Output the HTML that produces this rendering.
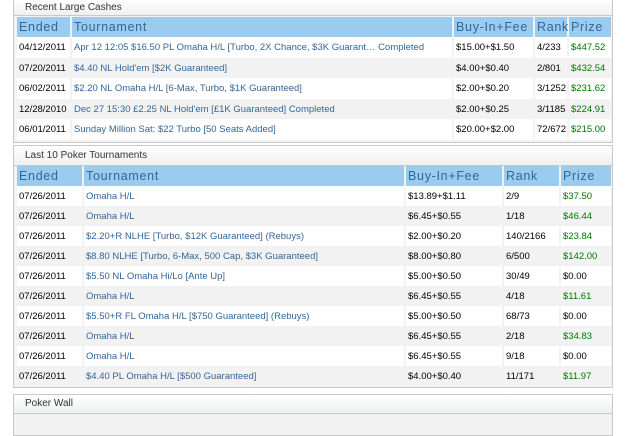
<html><head><style>
body{margin:0;width:629px;height:423px;overflow:hidden;background:#fff;font-family:"Liberation Sans",sans-serif;}
.p{position:absolute;left:13px;width:598px;border:1px solid #c8c8c8;background:#f2f2f2;}
.t{height:15px;background:linear-gradient(#fff,#eef0f0);border-bottom:1px solid #c8c8c8;font-size:10px;color:#333;line-height:15px;padding-left:11px;}
table{position:absolute;left:1px;border-collapse:separate;border-spacing:2px 0;font-size:9.5px;}
td{padding:0 0 0 2px;white-space:nowrap;overflow:hidden;}
th{background:#99ccee;color:#336699;font-weight:normal;text-align:left;font-size:12.5px;padding:0 0 0 2px;height:20px;font-family:"Liberation Sans",sans-serif;letter-spacing:0.7px}
tr.w td{background:#fff}
.n{color:#336699}.g{color:#007700}
</style></head><body>
<div class="p" style="top:-1px;height:142px">
<div class="t">Recent Large Cashes</div>
<table style="top:17px;width:596px;table-layout:fixed">
<col style="width:53px"><col style="width:380px"><col style="width:79px"><col style="width:32px"><col style="width:42px">
<tr><th>Ended</th><th>Tournament</th><th>Buy-In+Fee</th><th>Rank</th><th>Prize</th></tr>
<tr class="w" style="height:21px"><td>04/12/2011</td><td class="n">Apr 12 12:05 $16.50 PL Omaha H/L [Turbo, 2X Chance, $3K Guarant… Completed</td><td>$15.00+$1.50</td><td>4/233</td><td class="g">$447.52</td></tr>
<tr style="height:20px"><td>07/20/2011</td><td class="n">$4.40 NL Hold'em [$2K Guaranteed]</td><td>$4.00+$0.40</td><td>2/801</td><td class="g">$432.54</td></tr>
<tr class="w" style="height:21px"><td>06/02/2011</td><td class="n">$2.20 NL Omaha H/L [6-Max, Turbo, $1K Guaranteed]</td><td>$2.00+$0.20</td><td>3/1252</td><td class="g">$231.62</td></tr>
<tr style="height:20px"><td>12/28/2010</td><td class="n">Dec 27 15:30 £2.25 NL Hold'em [£1K Guaranteed] Completed</td><td>$2.00+$0.25</td><td>3/1185</td><td class="g">$224.91</td></tr>
<tr class="w" style="height:21px"><td>06/01/2011</td><td class="n">Sunday Million Sat: $22 Turbo [50 Seats Added]</td><td>$20.00+$2.00</td><td>72/672</td><td class="g">$215.00</td></tr>
</table></div>
<div class="p" style="top:145px;height:241px">
<div class="t" style="height:19px;line-height:19px">Last 10 Poker Tournaments</div>
<table style="top:20px;width:596px;table-layout:fixed">
<col style="width:65px"><col style="width:320px"><col style="width:96px"><col style="width:55px"><col style="width:50px">
<tr><th>Ended</th><th>Tournament</th><th>Buy-In+Fee</th><th>Rank</th><th>Prize</th></tr>
<tr class="w" style="height:20px"><td>07/26/2011</td><td class="n">Omaha H/L</td><td>$13.89+$1.11</td><td>2/9</td><td class="g">$37.50</td></tr>
<tr style="height:20px"><td>07/26/2011</td><td class="n">Omaha H/L</td><td>$6.45+$0.55</td><td>1/18</td><td class="g">$46.44</td></tr>
<tr class="w" style="height:20px"><td>07/26/2011</td><td class="n">$2.20+R NLHE [Turbo, $12K Guaranteed] (Rebuys)</td><td>$2.00+$0.20</td><td>140/2166</td><td class="g">$23.84</td></tr>
<tr style="height:20px"><td>07/26/2011</td><td class="n">$8.80 NLHE [Turbo, 6-Max, 500 Cap, $3K Guaranteed]</td><td>$8.00+$0.80</td><td>6/500</td><td class="g">$142.00</td></tr>
<tr class="w" style="height:20px"><td>07/26/2011</td><td class="n">$5.50 NL Omaha Hi/Lo [Ante Up]</td><td>$5.00+$0.50</td><td>30/49</td><td>$0.00</td></tr>
<tr style="height:20px"><td>07/26/2011</td><td class="n">Omaha H/L</td><td>$6.45+$0.55</td><td>4/18</td><td class="g">$11.61</td></tr>
<tr class="w" style="height:20px"><td>07/26/2011</td><td class="n">$5.50+R FL Omaha H/L [$750 Guaranteed] (Rebuys)</td><td>$5.00+$0.50</td><td>68/73</td><td>$0.00</td></tr>
<tr style="height:20px"><td>07/26/2011</td><td class="n">Omaha H/L</td><td>$6.45+$0.55</td><td>2/18</td><td class="g">$34.83</td></tr>
<tr class="w" style="height:20px"><td>07/26/2011</td><td class="n">Omaha H/L</td><td>$6.45+$0.55</td><td>9/18</td><td>$0.00</td></tr>
<tr style="height:20px"><td>07/26/2011</td><td class="n">$4.40 PL Omaha H/L [$500 Guaranteed]</td><td>$4.00+$0.40</td><td>11/171</td><td class="g">$11.97</td></tr>
</table></div>
<div class="p" style="top:394px;height:40px">
<div class="t" style="height:18px;line-height:18px">Poker Wall</div>
</div>
</body></html>
